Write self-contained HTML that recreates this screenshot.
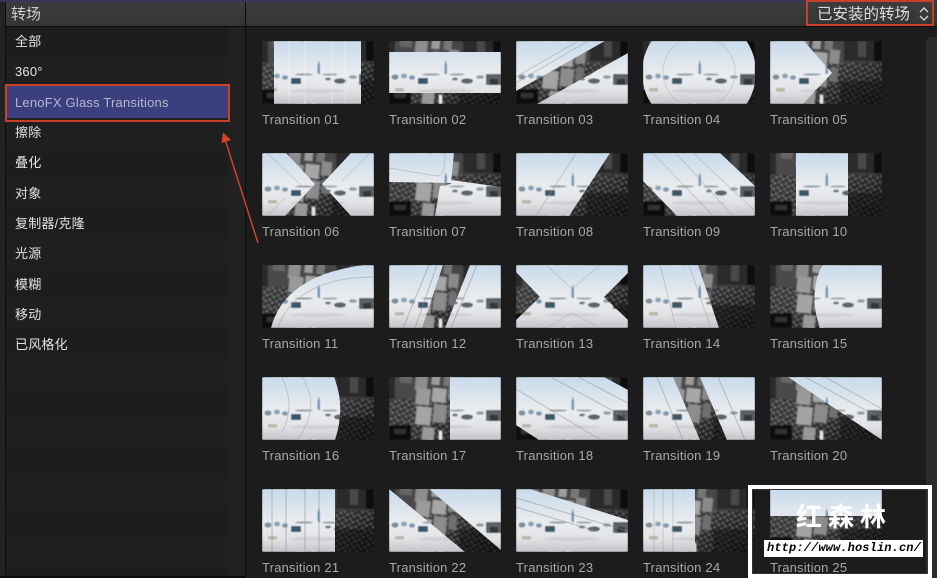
<!DOCTYPE html>
<html><head><meta charset="utf-8">
<style>
html,body{margin:0;padding:0;background:#1c1c1c;overflow:hidden;width:937px;height:578px;}
body{position:relative;font-family:"Liberation Sans","Noto Sans CJK SC",sans-serif;}
.a{position:absolute;}
.s{position:absolute;left:15px;font-size:13px;line-height:18px;color:#e2e2e2;letter-spacing:.2px;white-space:nowrap;}
.t{position:absolute;font-size:13px;line-height:16px;color:#a8a8a8;letter-spacing:.2px;white-space:nowrap;}
</style></head>
<body>
<!-- chrome -->
<div class="a" style="left:0;top:0;width:937px;height:2px;background:#35365f"></div>
<div class="a" style="left:0;top:2px;width:937px;height:24px;background:linear-gradient(#3d3d3d,#343434)"></div>
<div class="a" style="left:0;top:26px;width:937px;height:1px;background:#0c0c0c"></div>
<div class="a" style="left:0;top:2px;width:5px;height:576px;background:#232323"></div>
<div class="a" style="left:5px;top:2px;width:1px;height:576px;background:#0c0c0c"></div>
<div class="a" style="left:6px;top:27px;width:222px;height:549px;background:repeating-linear-gradient(#1d1d1d 0,#1d1d1d 30px,#1f1f1f 30px,#1f1f1f 60px)"></div>
<div class="a" style="left:228px;top:27px;width:17px;height:549px;background:#212121"></div>
<div class="a" style="left:245px;top:2px;width:1px;height:576px;background:#0c0c0c"></div>
<div class="a" style="left:0;top:576px;width:245px;height:2px;background:#0c0c0c"></div>
<div class="a" style="left:926px;top:37px;width:11px;height:541px;background:#2c2c2c;border-radius:5px 0 0 0"></div>

<div class="a" style="left:11px;top:5px;font-size:15px;line-height:20px;color:#cfcfcf;padding-top:0">转场</div>
<div class="s" style="top:33px">全部</div>
<div class="s" style="top:63px">360°</div>
<div class="a" style="left:7px;top:86px;width:221px;height:32px;background:#3b3f7e"></div>
<div class="s" style="top:94px;color:#b4b8cf">LenoFX Glass Transitions</div>
<div class="a" style="left:5px;top:84px;width:221px;height:34px;border:2px solid #c8402a"></div>
<div class="s" style="top:124px">擦除</div>
<div class="s" style="top:154px">叠化</div>
<div class="s" style="top:185px">对象</div>
<div class="s" style="top:215px">复制器/克隆</div>
<div class="s" style="top:245px">光源</div>
<div class="s" style="top:276px">模糊</div>
<div class="s" style="top:306px">移动</div>
<div class="s" style="top:336px">已风格化</div>

<div class="a" style="left:817px;top:5px;font-size:15.5px;line-height:20px;color:#dcdcdc;white-space:nowrap">已安装的转场</div>
<svg class="a" style="left:917px;top:6px" width="14" height="16" viewBox="0 0 14 16"><path d="M3 6 L7 2 L11 6 M3 10 L7 14 L11 10" fill="none" stroke="#d0d0d0" stroke-width="1.4"/></svg>
<div class="a" style="left:806px;top:0;width:124px;height:22px;border:2px solid #c8402a"></div>

<!-- thumbnails -->
<svg class="a" style="left:0;top:0" width="937" height="578" viewBox="0 0 937 578">
<defs>
<linearGradient id="sky" x1="0" y1="0" x2="0" y2="1"><stop offset="0" stop-color="#c8dbec"/><stop offset=".45" stop-color="#e6e9ed"/><stop offset=".55" stop-color="#eaecef"/><stop offset=".8" stop-color="#e0e2e5"/><stop offset="1" stop-color="#c2c4c8"/></linearGradient>
<linearGradient id="dk" x1="0" y1="0" x2="1" y2="1"><stop offset="0" stop-color="#4c4c4c"/><stop offset=".5" stop-color="#444"/><stop offset="1" stop-color="#111"/></linearGradient>
<pattern id="sp" width="7" height="6" patternUnits="userSpaceOnUse" patternTransform="rotate(14)"><rect x="1" y="1" width="2" height="1.5" fill="#aaa"/><rect x="4.500" y="3.500" width="1.500" height="1.500" fill="#ddd"/><rect x="0" y="4" width="3" height="1.500" fill="#000"/><rect x="4" y="0" width="3" height="2" fill="#000"/></pattern>
<filter id="b" x="-5%" y="-5%" width="110%" height="110%"><feGaussianBlur stdDeviation=".5"/></filter>
<filter id="b2" x="-5%" y="-5%" width="110%" height="110%"><feGaussianBlur stdDeviation=".7"/></filter>
<clipPath id="r"><rect width="112" height="63" rx="1.500"/></clipPath>
<g id="L" filter="url(#b)">
<rect width="112" height="63" fill="url(#sky)"/>
<path d="M55.500 33V24L56.800 19L58 24V33Z" fill="#6f94b8"/>
<ellipse cx="42" cy="33.500" rx="9" ry="1" fill="#8d99a4"/><ellipse cx="68" cy="33.500" rx="8" ry="1" fill="#98a2ab"/>
<ellipse cx="6" cy="36" rx="3.500" ry="2.600" fill="#7f8f9d"/><ellipse cx="15" cy="35" rx="3" ry="2.500" fill="#8ea5b8"/><ellipse cx="23" cy="36.500" rx="3" ry="2.300" fill="#7f99b0"/>
<rect x="29" y="37" width="10" height="6" rx="1" fill="#3c5769"/>
<rect x="6" y="47" width="9" height="3.500" rx="1" fill="#bdb6a8"/>
<ellipse cx="78" cy="40" rx="6" ry="2.600" fill="#5a656e"/><ellipse cx="66" cy="38" rx="3" ry="1.500" fill="#6e7a83"/>
<rect x="97" y="33" width="15" height="11" rx="1" fill="#5a6268"/><rect x="101" y="38" width="8" height="6" fill="#31373c"/><ellipse cx="91" cy="36" rx="4" ry="1.800" fill="#949da5"/>
<ellipse cx="56" cy="50" rx="28" ry="2" fill="#cfd1d4"/>
</g>
<g id="D" filter="url(#b2)">
<rect width="112" height="63" fill="url(#dk)"/>
<rect y="22" width="112" height="41" fill="url(#sp)" opacity=".45"/>
<g transform="rotate(6 56 30)">
<rect x="8" y="-4" width="12" height="14" fill="#666"/><rect x="24" y="-4" width="12" height="20" fill="#8e8e8e"/><rect x="40" y="-4" width="8" height="13" fill="#9c9c9c"/><rect x="52" y="-4" width="8" height="13" fill="#777"/>
<rect x="26" y="14" width="14" height="16" fill="#9a9a9a"/><rect x="42" y="12" width="14" height="14" fill="#a6a6a6"/><rect x="58" y="8" width="10" height="14" fill="#8a8a8a"/>
<rect x="28" y="32" width="15" height="18" fill="#a4a4a4"/><rect x="45" y="28" width="13" height="18" fill="#8c8c8c"/><rect x="60" y="26" width="8" height="14" fill="#707070"/><rect x="36" y="52" width="12" height="13" fill="#999"/>
</g>
<rect x="0" y="0" width="6" height="22" fill="#2c2c2c"/>
<rect x="74" y="0" width="38" height="20" fill="#2a2a2a"/><rect x="88" y="0" width="8" height="16" fill="#4a4a4a"/><rect x="104" y="0" width="8" height="20" fill="#111"/>
<rect x="0" y="48" width="22" height="15" fill="#111"/><rect x="5" y="52" width="12" height="5" fill="#333"/>
<rect x="70" y="40" width="42" height="23" fill="#111" opacity=".5"/>
<rect x="50" y="54" width="3" height="9" fill="#eee"/>
</g>
</defs>
<g stroke="none">
<g transform="translate(262,41)" clip-path="url(#r)"><use href="#D"/><svg x="12" y="0" width="87" height="63" viewBox="12 0 87 63"><use href="#L"/></svg><path d="M27 0V63M43 0V63M70 0V63M83 0V63" stroke="#fff" stroke-opacity=".3"/></g>
<g transform="translate(389,41)" clip-path="url(#r)"><use href="#D"/><svg x="0" y="11" width="112" height="41" viewBox="0 11 112 41"><use href="#L"/></svg></g>
<g transform="translate(516,41)" clip-path="url(#r)"><use href="#D"/><clipPath id="c3"><path d="M0 0H89L0 50ZM21 63L112 12V63Z"/></clipPath><use href="#L" clip-path="url(#c3)"/><path d="M0 36L62 0M0 42L72 0" stroke="#999" stroke-opacity=".5" fill="none"/></g>
<g transform="translate(643,41)" clip-path="url(#r)"><use href="#D"/><clipPath id="c4"><circle cx="56" cy="31.500" r="57"/></clipPath><use href="#L" clip-path="url(#c4)"/><circle cx="56" cy="31" r="36" fill="none" stroke="#aaa" stroke-opacity=".45"/></g>
<g transform="translate(770,41)" clip-path="url(#r)"><use href="#D"/><clipPath id="c5"><path d="M0 0H34L62 32L33 63H0Z"/></clipPath><use href="#L" clip-path="url(#c5)"/></g>

<g transform="translate(262,153)" clip-path="url(#r)"><use href="#D"/><clipPath id="c6"><path d="M0 0H24L53 31L23 63H0ZM89 0L60 31L89 63H112V0Z"/></clipPath><use href="#L" clip-path="url(#c6)"/><path d="M5 0L40 33M5 63L24 44M108 0L80 28" stroke="#aaa" stroke-opacity=".45" fill="none"/></g>
<g transform="translate(389,153)" clip-path="url(#r)"><use href="#D"/><clipPath id="c7"><path d="M0 0H65L62 30L0 29ZM62 27L112 34V63H46L51 33L62 31Z"/></clipPath><use href="#L" clip-path="url(#c7)"/><path d="M0 15L48 23Q56 24 56 0" stroke="#aaa" stroke-opacity=".6" fill="none"/></g>
<g transform="translate(516,153)" clip-path="url(#r)"><use href="#D"/><clipPath id="c8"><path d="M0 0H94L53 63H0Z"/></clipPath><use href="#L" clip-path="url(#c8)"/><path d="M60 0L20 63" stroke="#999" stroke-opacity=".5" fill="none"/></g>
<g transform="translate(643,153)" clip-path="url(#r)"><use href="#D"/><clipPath id="c9"><path d="M0 0H77L112 33V63H34L0 28Z"/></clipPath><use href="#L" clip-path="url(#c9)"/><path d="M10 0L70 63M33 0L90 63M50 0L112 58" stroke="#999" stroke-opacity=".4" fill="none"/></g>
<g transform="translate(770,153)" clip-path="url(#r)"><use href="#D"/><svg x="26" y="0" width="52" height="63" viewBox="26 0 52 63"><use href="#L"/></svg></g>

<g transform="translate(262,265)" clip-path="url(#r)"><use href="#D"/><clipPath id="c11"><path d="M9 63C16 35 40 8 102 0L112 0V63Z"/></clipPath><use href="#L" clip-path="url(#c11)"/><path d="M16 63C24 38 50 12 112 12" stroke="#999" stroke-opacity=".5" fill="none"/></g>
<g transform="translate(389,265)" clip-path="url(#r)"><use href="#D"/><clipPath id="c12"><path d="M0 0H54L33 63H0ZM81 0H112V63H56Z"/></clipPath><use href="#L" clip-path="url(#c12)"/><path d="M40 0L14 63M48 0L26 63M88 0L62 63" stroke="#888" stroke-opacity=".5" fill="none"/></g>
<g transform="translate(516,265)" clip-path="url(#r)"><use href="#D"/><clipPath id="c13"><path d="M0 0H112V8L88 32L112 55V63H0V55L24 32L0 7Z"/></clipPath><use href="#L" clip-path="url(#c13)"/><path d="M30 0L56 24L84 0M30 63L56 48L84 63" stroke="#aaa" stroke-opacity=".45" fill="none"/></g>
<g transform="translate(643,265)" clip-path="url(#r)"><use href="#D"/><clipPath id="c14"><path d="M0 0H55L76 63H0Z"/></clipPath><use href="#L" clip-path="url(#c14)"/><path d="M17 0L33 63M46 0L68 63" stroke="#999" stroke-opacity=".45" fill="none"/></g>
<g transform="translate(770,265)" clip-path="url(#r)"><use href="#D"/><clipPath id="c15"><path d="M52 0Q38 30 50 63H112V0Z"/></clipPath><use href="#L" clip-path="url(#c15)"/></g>

<g transform="translate(262,377)" clip-path="url(#r)"><use href="#D"/><clipPath id="c16"><path d="M0 0H72Q84 30 73 63H0Z"/></clipPath><use href="#L" clip-path="url(#c16)"/><path d="M40 0Q60 30 35 63M20 0Q34 30 20 55" stroke="#999" stroke-opacity=".45" fill="none"/></g>
<g transform="translate(389,377)" clip-path="url(#r)"><use href="#D"/><svg x="61" y="0" width="51" height="63" viewBox="61 0 51 63"><use href="#L"/></svg></g>
<g transform="translate(516,377)" clip-path="url(#r)"><use href="#D"/><clipPath id="c18"><path d="M0 0H88L112 13V63H23L0 48Z"/></clipPath><use href="#L" clip-path="url(#c18)"/><path d="M35 0L112 42M62 0L112 26M0 12L85 63" stroke="#888" stroke-opacity=".45" fill="none"/></g>
<g transform="translate(643,377)" clip-path="url(#r)"><use href="#D"/><clipPath id="c19"><path d="M0 0H30L57 63H0ZM57 0H112V63H84Z"/></clipPath><use href="#L" clip-path="url(#c19)"/><path d="M14 0L40 63M75 0L102 63" stroke="#888" stroke-opacity=".5" fill="none"/></g>
<g transform="translate(770,377)" clip-path="url(#r)"><use href="#D"/><clipPath id="c20"><path d="M18 0H112V63Z"/></clipPath><use href="#L" clip-path="url(#c20)"/><path d="M35 0L112 42M55 0L112 32" stroke="#888" stroke-opacity=".45" fill="none"/></g>

<g transform="translate(262,489)" clip-path="url(#r)"><use href="#D"/><svg x="0" y="0" width="73" height="63" viewBox="0 0 73 63"><use href="#L"/></svg><path d="M10 0V63M24 0V63M43 0V63M57 0V63" stroke="#777" stroke-opacity=".45"/></g>
<g transform="translate(389,489)" clip-path="url(#r)"><use href="#D"/><clipPath id="c22"><path d="M0 0L76 63H0ZM40 0H112V61Z"/></clipPath><use href="#L" clip-path="url(#c22)"/></g>
<g transform="translate(516,489)" clip-path="url(#r)"><use href="#D"/><clipPath id="c23"><path d="M0 0H14L112 31V63H0Z"/></clipPath><use href="#L" clip-path="url(#c23)"/><path d="M0 9L112 42M0 18L80 42" stroke="#8a8a8a" stroke-opacity=".5" fill="none"/></g>
<g transform="translate(643,489)" clip-path="url(#r)"><use href="#D"/><svg x="0" y="0" width="52" height="63" viewBox="0 0 52 63"><use href="#L"/></svg><path d="M11 0V63M20 0V63M30 0V63" stroke="#888" stroke-opacity=".35"/></g>
<g transform="translate(770,489)" clip-path="url(#r)"><use href="#D"/><svg x="0" y="0" width="112" height="27" viewBox="0 0 112 27"><use href="#L"/></svg></g>
</g>
<!-- red arrow -->
<path d="M258 243L225.500 141" stroke="#d4442a" stroke-width="1.400" fill="none"/>
<path d="M223 132.500L231 140L221.500 143Z" fill="#d4442a"/>
</svg>

<div class="t" style="left:262px;top:112px">Transition 01</div>
<div class="t" style="left:389px;top:112px">Transition 02</div>
<div class="t" style="left:516px;top:112px">Transition 03</div>
<div class="t" style="left:643px;top:112px">Transition 04</div>
<div class="t" style="left:770px;top:112px">Transition 05</div>
<div class="t" style="left:262px;top:224px">Transition 06</div>
<div class="t" style="left:389px;top:224px">Transition 07</div>
<div class="t" style="left:516px;top:224px">Transition 08</div>
<div class="t" style="left:643px;top:224px">Transition 09</div>
<div class="t" style="left:770px;top:224px">Transition 10</div>
<div class="t" style="left:262px;top:336px">Transition 11</div>
<div class="t" style="left:389px;top:336px">Transition 12</div>
<div class="t" style="left:516px;top:336px">Transition 13</div>
<div class="t" style="left:643px;top:336px">Transition 14</div>
<div class="t" style="left:770px;top:336px">Transition 15</div>
<div class="t" style="left:262px;top:448px">Transition 16</div>
<div class="t" style="left:389px;top:448px">Transition 17</div>
<div class="t" style="left:516px;top:448px">Transition 18</div>
<div class="t" style="left:643px;top:448px">Transition 19</div>
<div class="t" style="left:770px;top:448px">Transition 20</div>
<div class="t" style="left:262px;top:560px">Transition 21</div>
<div class="t" style="left:389px;top:560px">Transition 22</div>
<div class="t" style="left:516px;top:560px">Transition 23</div>
<div class="t" style="left:643px;top:560px">Transition 24</div>
<div class="t" style="left:770px;top:560px">Transition 25</div>

<!-- watermark -->
<div class="a" style="left:748px;top:485px;width:176px;height:85px;border:4px solid #fff;outline:1px solid #333;outline-offset:-5px"></div>
<div class="a" style="left:796px;top:500px;font-family:'WenQuanYi Zen Hei','Noto Sans CJK SC',sans-serif;font-size:26px;line-height:32px;letter-spacing:6px;color:#fff;font-weight:bold;white-space:nowrap">红森林</div>
<div class="a" style="left:764px;top:540px;width:159px;height:17px;background:#fff"></div>
<div class="a" style="left:767px;top:541px;font-family:'Liberation Mono',monospace;font-style:italic;font-weight:bold;font-size:12px;line-height:15px;letter-spacing:.13px;color:#000;white-space:nowrap">http://www.hoslin.cn/</div>
</body></html>
